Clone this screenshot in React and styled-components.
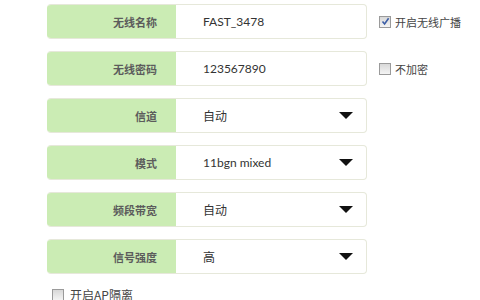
import React from "react";
import styled, { createGlobalStyle } from "styled-components";

const Global = createGlobalStyle`
  html, body { margin: 0; padding: 0; background: #fff; }
  body { font-family: Lato, "Noto Sans CJK SC", sans-serif; }
`;

const Page = styled.div`
  width: 480px;
  height: 300px;
  overflow: hidden;
  padding: 4px 0 0 47px;
  box-sizing: border-box;
  display: flex;
  flex-direction: column;
  gap: 12px;
`;

const Row = styled.div`
  display: flex;
  align-items: center;
  height: 35px;
`;

const Field = styled.div`
  display: flex;
  width: 320px;
  height: 35px;
  box-sizing: border-box;
  border-radius: 4px;
  overflow: hidden;
  border: 1px solid #e6e8da;
  border-left: none;
  background: #fff;
`;

const Label = styled.div`
  width: 129px;
  flex: none;
  background: #cbecb4;
  display: flex;
  align-items: center;
  justify-content: flex-end;
  padding-right: 19px;
  box-sizing: border-box;
  margin: -1px 0;
  font-family: "Noto Sans CJK SC", sans-serif;
  font-size: 11px;
  font-weight: 700;
  color: #5c5c5c;
`;

const Value = styled.div`
  flex: 1;
  display: flex;
  align-items: center;
  justify-content: space-between;
  padding: 0 13px 0 27px;
  font-family: Lato, "Noto Sans CJK SC", sans-serif;
  font-size: 12px;
  color: #333;
`;

const Arrow = styled.span`
  width: 0;
  height: 0;
  border-left: 7px solid transparent;
  border-right: 7px solid transparent;
  border-top: 7px solid #111;
`;

const Check = styled.label`
  display: flex;
  align-items: center;
  gap: ${(p) => p.$gap || 4}px;
  margin-left: ${(p) => p.$ml || 0}px;
  font-family: "Noto Sans CJK SC", sans-serif;
  font-size: ${(p) => p.$fs || 11}px;
  color: #444;
`;

const Box = styled.span`
  width: 10px;
  height: 10px;
  border: 1px solid #9a9a9a;
  background: linear-gradient(#d8d8d8, #f4f4f4);
  display: flex;
  align-items: center;
  justify-content: center;
  box-sizing: content-box;
`;

const Tick = () => (
  <svg width="9" height="9" viewBox="0 0 9 9">
    <path d="M1.5 4.5 L3.6 7 L7.6 1.3" fill="none" stroke="#3c5ea6" strokeWidth="1.6" />
  </svg>
);

const Bottom = styled.div`
  display: flex;
  padding-left: 5px;
`;

const rows = [
  { label: "无线名称", value: "FAST_3478", check: { text: "开启无线广播", on: true } },
  { label: "无线密码", value: "123567890", check: { text: "不加密", on: false } },
  { label: "信道", value: "自动", select: true },
  { label: "模式", value: "11bgn mixed", select: true },
  { label: "频段带宽", value: "自动", select: true },
  { label: "信号强度", value: "高", select: true },
];

export default function App() {
  return (
    <>
      <Global />
      <Page>
        {rows.map((r) => (
          <Row key={r.label}>
            <Field>
              <Label>{r.label}</Label>
              <Value>
                <span>{r.value}</span>
                {r.select && <Arrow />}
              </Value>
            </Field>
            {r.check && (
              <Check $ml={12}>
                <Box>{r.check.on && <Tick />}</Box>
                {r.check.text}
              </Check>
            )}
          </Row>
        ))}
        <Bottom>
          <Check $gap={6} $fs={12}>
            <Box />
            开启AP隔离
          </Check>
        </Bottom>
      </Page>
    </>
  );
}
